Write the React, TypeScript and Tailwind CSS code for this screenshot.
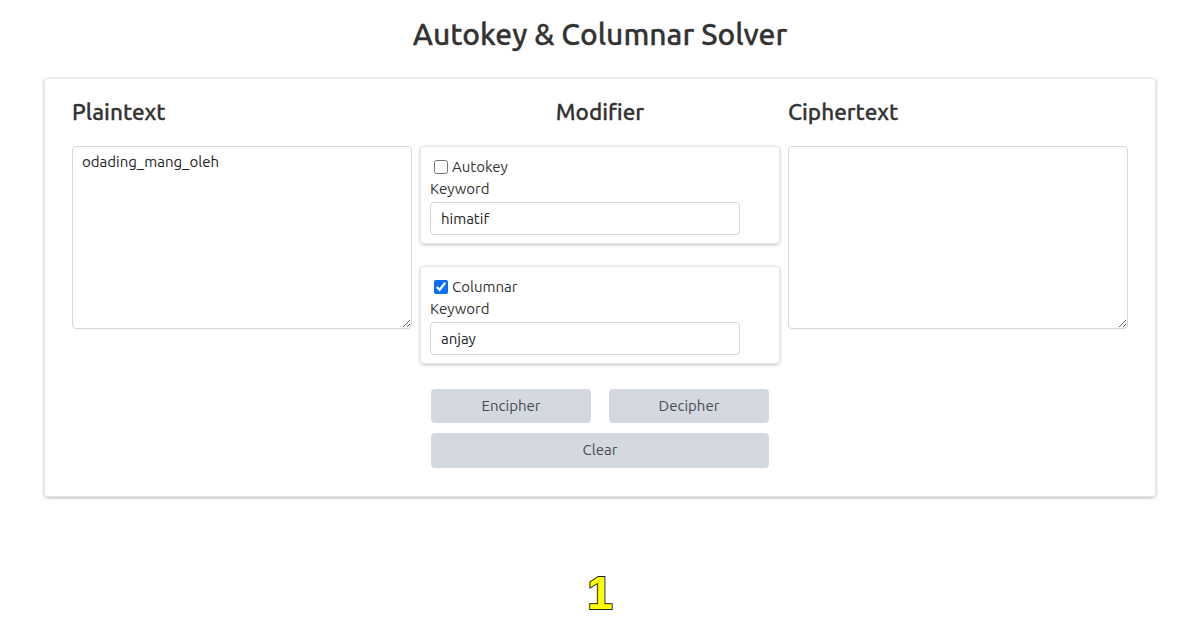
import React from "react";

const Checkbox = ({ checked }: { checked: boolean }) => (
  <input
    type="checkbox"
    defaultChecked={checked}
    className="m-0 ml-[4px] mr-[4px] h-[14px] w-[14px] accent-[#0b6df6]"
  />
);

function ModifierBox({ label, checked, keyword }: { label: string; checked: boolean; keyword: string }) {
  return (
    <div className="rounded border border-gray-200 px-[9px] pt-[9px] pb-[8px] shadow-[0_1px_3px_rgba(0,0,0,0.25)]">
      <label className="flex h-[22px] items-center text-[15px] text-[#333]">
        <Checkbox checked={checked} />
        {label}
      </label>
      <div className="h-[22px] text-[15px] leading-[22px] text-[#333]">Keyword</div>
      <input
        type="text"
        defaultValue={keyword}
        className="mt-[2px] h-[33px] w-[310px] rounded border border-gray-300 px-[10px] text-[15px] text-[#222] outline-none"
      />
    </div>
  );
}

const heading = "font-['Ubuntu','Noto_Sans',sans-serif] font-medium [-webkit-text-stroke:0.3px_#333]";

export default function App() {
  return (
    <div className="min-h-[631px] bg-white font-['Ubuntu','Noto_Sans',sans-serif] text-[#333]">
      <h1 className={`${heading} pt-[16px] text-center text-[30px] leading-9 text-[#333]`}>
        Autokey &amp; Columnar Solver
      </h1>

      {/* Card */}
      <div className="mx-[44px] mt-[26px] rounded border border-gray-200 px-[27px] pt-[19px] pb-[28px] shadow-[0_1px_3px_rgba(0,0,0,0.3)]">
        <div className="flex gap-2">
          {/* Plaintext */}
          <div className="w-[340px]">
            <h2 className={`${heading} h-7 text-[22.5px] leading-7`}>Plaintext</h2>
            <textarea
              defaultValue="odading_mang_oleh"
              spellCheck={false}
              className="mt-5 h-[183px] w-full resize-y rounded border border-gray-300 px-[9px] py-[4px] text-[15px] text-[#222] outline-none"
            />
          </div>

          {/* Modifier */}
          <div className="w-[360px]">
            <h2 className={`${heading} h-7 text-center text-[22.5px] leading-7`}>Modifier</h2>
            <div className="mt-5 flex flex-col gap-[22px]">
              <ModifierBox label="Autokey" checked={false} keyword="himatif" />
              <ModifierBox label="Columnar" checked={true} keyword="anjay" />
            </div>
            <div className="mt-[25px] flex flex-col gap-[10px] px-[11px]">
              <div className="flex gap-[18px]">
                <button className="h-[34px] flex-1 rounded bg-[#d4d8df] text-[15px] text-[#464b52]">Encipher</button>
                <button className="h-[34px] flex-1 rounded bg-[#d4d8df] text-[15px] text-[#464b52]">Decipher</button>
              </div>
              <button className="h-[35px] w-full rounded bg-[#d4d8df] text-[15px] text-[#464b52]">Clear</button>
            </div>
          </div>

          {/* Ciphertext */}
          <div className="w-[340px]">
            <h2 className={`${heading} h-7 text-[22.5px] leading-7`}>Ciphertext</h2>
            <textarea
              spellCheck={false}
              className="mt-5 h-[183px] w-full resize-y rounded border border-gray-300 px-[9px] py-[4px] text-[15px] text-[#222] outline-none"
            />
          </div>
        </div>
      </div>

      <div className="mt-[70px] text-center font-['Liberation_Sans',sans-serif] text-[46px] font-bold leading-[52px] text-[#ffff00] [-webkit-text-stroke:2px_#222] [paint-order:stroke_fill]">
        1
      </div>
    </div>
  );
}
